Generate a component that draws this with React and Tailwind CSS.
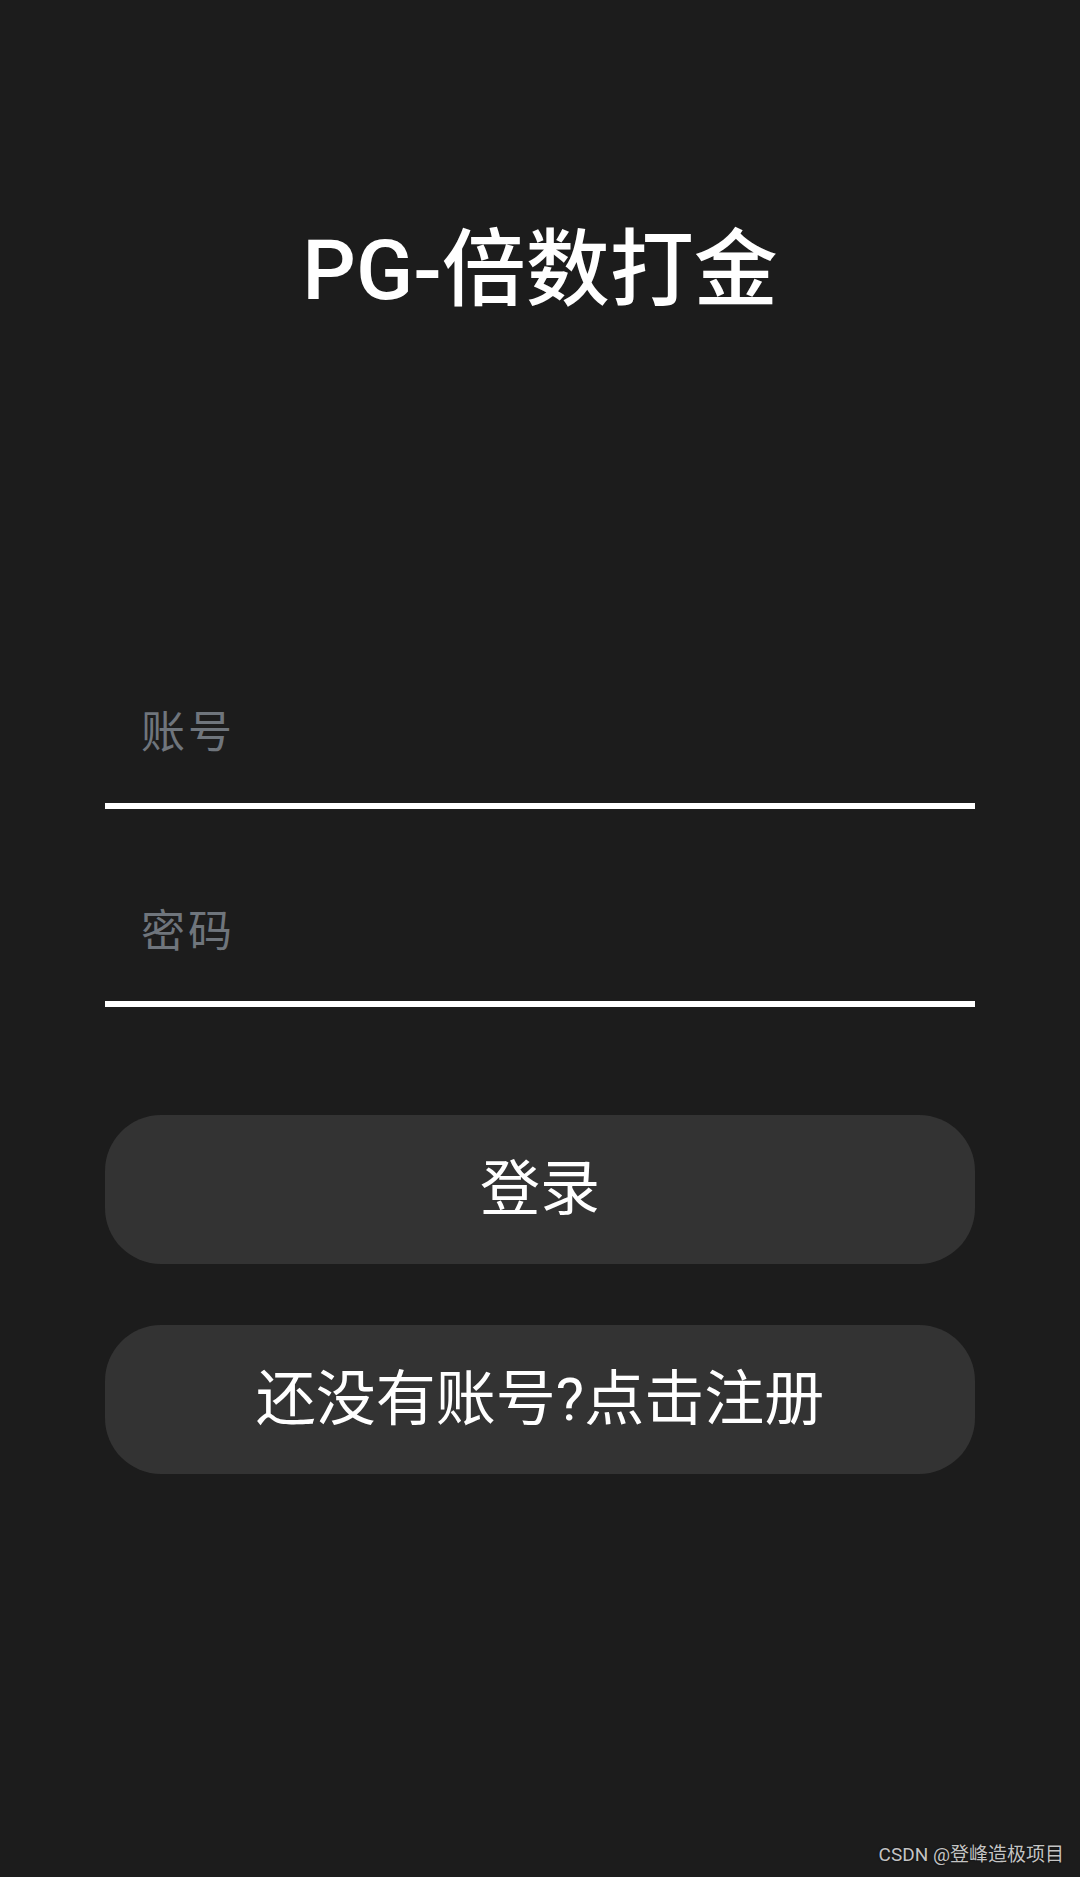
export default function App() {
  const cjk = { fontFamily: 'Roboto, "Noto Sans CJK SC", sans-serif' };
  return (
    <div className="relative min-h-[1877px] w-full bg-[#1c1c1c] flex flex-col" style={cjk}>
      <h1 className="pt-[221px] h-[316px] text-center text-[84px] leading-[100px] font-medium text-white">
        PG-倍数打金
      </h1>
      <div className="mx-[105px] flex flex-col">
        <div className="mt-[387px] pb-[40px] border-b-[6px] border-white">
          <input
            type="text"
            placeholder="账号"
            className="block w-full h-[60px] bg-transparent pl-[36px] text-[44px] tracking-[3px] text-white placeholder:text-[#6f757c] outline-none"
          />
        </div>
        <div className="mt-[93px] pb-[39px] border-b-[6px] border-white">
          <input
            type="password"
            placeholder="密码"
            className="block w-full h-[60px] bg-transparent pl-[36px] text-[44px] tracking-[3px] text-white placeholder:text-[#6f757c] outline-none"
          />
        </div>
        <button className="mt-[108px] h-[149px] w-full rounded-[56px] bg-[#333333] text-white text-[60px] leading-none flex items-center justify-center">
          登录
        </button>
        <button className="mt-[61px] h-[149px] w-full rounded-[56px] bg-[#333333] text-white text-[60px] leading-none flex items-center justify-center">
          还没有账号?点击注册
        </button>
      </div>
      <div className="absolute right-[16px] bottom-[8px] text-[19px] text-[#c4c4c4] [text-shadow:0_0_2px_rgba(0,0,0,0.8)]">
        CSDN @登峰造极项目
      </div>
    </div>
  );
}
